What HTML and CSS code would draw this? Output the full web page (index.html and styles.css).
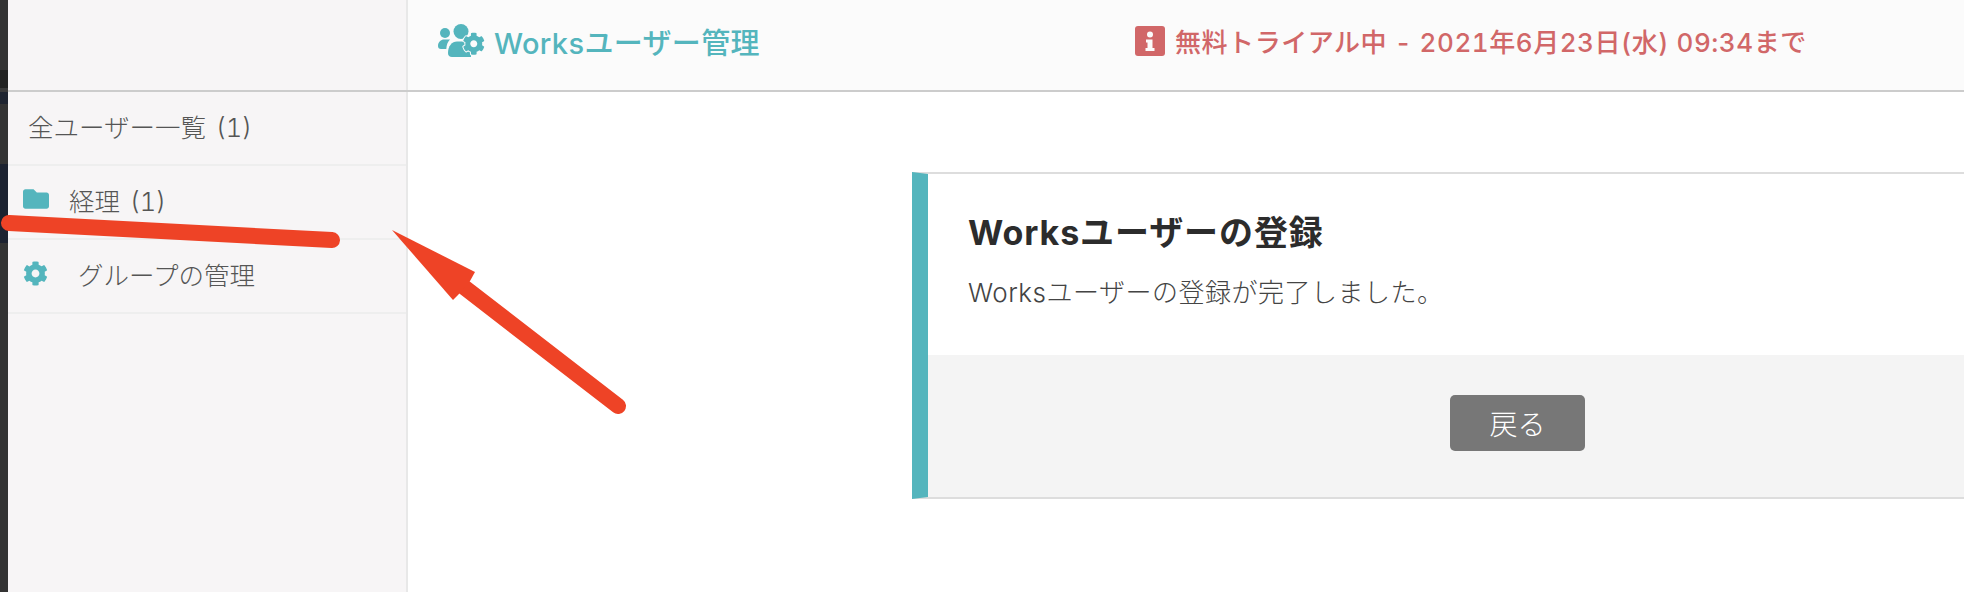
FILE: index.html
```html
<!DOCTYPE html>
<html lang="ja">
<head>
    <meta charset="UTF-8">
    <title>Worksユーザー管理</title>
    <link rel="stylesheet" href="styles.css">
</head>
<body>
    <div class="edge"></div>
    <aside class="sidebar">
        <div class="sidebar-top"></div>
        <a class="nav-item">全ユーザー一覧 (1)</a>
        <a class="nav-item nav-folder">
            <svg class="nav-icon" viewBox="0 64 512 384"><path d="M464 128H272l-64-64H48C21.490 64 0 85.490 0 112v288c0 26.510 21.490 48 48 48h416c26.510 0 48-21.490 48-48V176c0-26.510-21.490-48-48-48z"/></svg>
            <span>経理 (1)</span>
        </a>
        <a class="nav-item nav-settings">
            <svg class="nav-icon" viewBox="0 0 512 512"><path d="M487.400 315.700l-42.600-24.600c4.300-23.200 4.300-47 0-70.200l42.600-24.600c4.900-2.800 7.100-8.600 5.500-14-11.100-35.600-30-67.800-54.700-94.600-3.800-4.100-10-5.100-14.800-2.300L380.800 110c-17.900-15.400-38.500-27.300-60.800-35.100V25.800c0-5.600-3.900-10.500-9.400-11.700-36.700-8.200-74.300-7.800-109.200 0-5.500 1.200-9.400 6.100-9.400 11.700V75c-22.200 7.900-42.800 19.800-60.800 35.100L88.700 85.500c-4.900-2.800-11-1.900-14.800 2.300-24.700 26.700-43.600 58.900-54.700 94.600-1.700 5.400.6 11.200 5.500 14L67.300 221c-4.300 23.200-4.300 47 0 70.200l-42.600 24.600c-4.900 2.800-7.100 8.600-5.500 14 11.100 35.600 30 67.800 54.700 94.600 3.800 4.100 10 5.100 14.800 2.300l42.600-24.600c17.900 15.400 38.500 27.300 60.800 35.100v49.200c0 5.600 3.900 10.500 9.400 11.700 36.700 8.200 74.300 7.800 109.200 0 5.500-1.200 9.400-6.100 9.400-11.700v-49.200c22.200-7.900 42.800-19.800 60.800-35.100l42.600 24.600c4.900 2.800 11 1.900 14.800-2.300 24.700-26.700 43.600-58.900 54.700-94.600 1.500-5.500-.7-11.300-5.600-14.100zM256 336c-44.100 0-80-35.900-80-80s35.900-80 80-80 80 35.900 80 80-35.900 80-80 80z"/></svg>
            <span>グループの管理</span>
        </a>
    </aside>
    <div class="main">
        <header class="topbar">
            <div class="app-title">
                <svg class="app-icon" viewBox="0 0 47 33">
                    <circle cx="7" cy="9" r="5"/>
                    <path d="M0 22c0-4 3-6.500 6-6.500h6c-2 2-3.500 5-3.700 9.500H3c-2 0-3-1-3-3z"/>
                    <circle cx="23" cy="7.500" r="7.500"/>
                    <path d="M10 29c0-7 4-11.500 9-11.500h8c3 0 5 2 6 5v10.500H14c-2.500 0-4-1.500-4-4z"/>
                    <g transform="translate(24.500 8.500) scale(.044)">
                        <path class="gear" d="M487.400 315.700l-42.600-24.600c4.300-23.200 4.300-47 0-70.200l42.600-24.600c4.900-2.800 7.100-8.600 5.500-14-11.100-35.600-30-67.800-54.700-94.600-3.800-4.100-10-5.100-14.800-2.300L380.800 110c-17.900-15.400-38.500-27.300-60.800-35.100V25.800c0-5.600-3.900-10.500-9.400-11.700-36.700-8.200-74.300-7.800-109.200 0-5.500 1.200-9.400 6.100-9.400 11.700V75c-22.200 7.900-42.800 19.800-60.800 35.100L88.700 85.500c-4.900-2.800-11-1.900-14.800 2.300-24.700 26.700-43.600 58.900-54.700 94.600-1.700 5.400.6 11.200 5.500 14L67.300 221c-4.300 23.200-4.300 47 0 70.200l-42.600 24.600c-4.900 2.800-7.100 8.600-5.500 14 11.100 35.600 30 67.800 54.700 94.600 3.800 4.100 10 5.100 14.800 2.300l42.600-24.600c17.900 15.400 38.500 27.300 60.800 35.100v49.200c0 5.600 3.900 10.500 9.400 11.700 36.700 8.200 74.300 7.800 109.200 0 5.500-1.200 9.400-6.100 9.400-11.700v-49.200c22.200-7.900 42.800-19.800 60.800-35.100l42.600 24.600c4.900 2.800 11 1.900 14.800-2.300 24.700-26.700 43.600-58.900 54.700-94.600 1.500-5.500-.7-11.300-5.600-14.100zM256 336c-44.100 0-80-35.900-80-80s35.900-80 80-80 80 35.900 80 80-35.900 80-80 80z"/>
                    </g>
                </svg>
                <span>Worksユーザー管理</span>
            </div>
            <div class="trial">
                <svg class="trial-icon" viewBox="0 0 30 30"><rect width="30" height="30" rx="3"/><circle cx="15" cy="8.500" r="3" fill="#fbfbfb"/><path d="M11 13.500h6.500v8.500H19.500v3H10.500v-3h2v-5.500H11z" fill="#fbfbfb"/></svg>
                <span>無料トライアル中 - 2021年6月23日(水) 09:34まで</span>
            </div>
        </header>
        <section class="content">
            <div class="card">
                <div class="card-body">
                    <h2>Worksユーザーの登録</h2>
                    <p>Worksユーザーの登録が完了しました。</p>
                </div>
                <div class="card-footer">
                    <button class="btn-back">戻る</button>
                </div>
            </div>
        </section>
    </div>
    <svg class="markup" viewBox="0 0 1964 592" width="1964" height="592">
        <path class="markup-line" d="M9 223 L332 240"/>
        <path class="markup-line" d="M618 406 L460 284"/>
        <path class="markup-head" d="M392 230 L475 272 L470 281 L458 295 L453 300 Z"/>
    </svg>
</body>
</html>
```

FILE: styles.css
```css
* {
    margin: 0;
    padding: 0;
    box-sizing: border-box;
}

html, body {
    height: 592px;
    overflow: hidden;
}

body {
    position: relative;
    display: flex;
    background: #fff;
    font-family: Inter, "Noto Sans CJK JP", sans-serif;
    font-variant-numeric: tabular-nums;
    color: #555;
}

.edge {
    width: 8px;
    background: linear-gradient(#333 0, #333 70px, #222 70px, #222 88px, #3a3a3a 88px, #3a3a3a 92px, #1e2430 92px, #1e2430 104px, #333 104px, #333 164px, #1c2230 164px, #1c2230 243px, #333 243px);
}

.sidebar {
    width: 400px;
    background: #f7f5f6;
    border-right: 2px solid #e8e8e8;
}

.sidebar-top {
    height: 92px;
    border-bottom: 2px solid #ccc;
    margin-right: -2px;
}

.nav-item {
    display: flex;
    align-items: center;
    height: 74px;
    padding-left: 20px;
    padding-bottom: 6px;
    border-bottom: 2px solid #eee;
    font-size: 25.500px;
    font-weight: 300;
    word-spacing: 3px;
}

.nav-icon {
    fill: #54b5bd;
}

.nav-folder {
    padding-left: 15px;
}

.nav-folder .nav-icon {
    width: 26px;
    height: 20px;
    margin-right: 20px;
}

.nav-settings {
    padding-left: 15px;
}

.nav-settings .nav-icon {
    width: 25px;
    height: 25px;
    margin-right: 30px;
}

.main {
    flex: 1;
    min-width: 0;
}

.topbar {
    display: flex;
    align-items: center;
    height: 92px;
    background: #fbfbfb;
    border-bottom: 2px solid #ccc;
    padding-left: 30px;
    padding-bottom: 9px;
}

.app-title {
    display: flex;
    align-items: center;
    width: 697px;
    color: #54b5bd;
    font-size: 29px;
    font-weight: 500;
    letter-spacing: .35px;
}

.app-icon {
    width: 47px;
    height: 33px;
    fill: #54b5bd;
    margin-right: 9px;
}

.gear {
    stroke: #fbfbfb;
    stroke-width: 45;
    paint-order: stroke;
}

.trial {
    display: flex;
    align-items: center;
    color: #d16768;
    font-size: 26px;
    font-weight: 500;
    letter-spacing: .55px;
}

.trial-icon {
    width: 30px;
    height: 30px;
    fill: #d16768;
    margin-right: 10px;
}

.content {
    padding: 80px 0 0 504px;
}

.card {
    border-top: 2px solid #ddd;
    border-bottom: 2px solid #ddd;
    border-left: 16px solid #54b5bd;
}

.card-body {
    height: 181px;
    padding: 32px 40px 0;
}

.card-body h2 {
    font-size: 34px;
    font-weight: 700;
    color: #2c2c2c;
    letter-spacing: .9px;
    margin-bottom: 17px;
}

.card-body p {
    font-size: 26px;
    font-weight: 300;
    color: #444;
    letter-spacing: .5px;
}

.card-footer {
    height: 142px;
    background: #f4f4f4;
    padding-top: 40px;
    padding-left: 522px;
}

.btn-back {
    width: 135px;
    height: 56px;
    background: #777;
    color: #fff;
    border: none;
    border-radius: 5px;
    font-family: inherit;
    font-size: 28px;
    font-weight: 300;
}

.markup {
    position: absolute;
    top: 0;
    left: 0;
    pointer-events: none;
}

.markup-line {
    fill: none;
    stroke: #ee4326;
    stroke-width: 16;
    stroke-linecap: round;
}

.markup-head {
    fill: #ee4326;
}
```
